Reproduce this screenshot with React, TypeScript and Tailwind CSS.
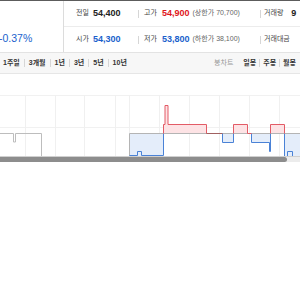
const font = { fontFamily: '"Liberation Sans", "Noto Sans CJK KR", sans-serif' }

function Sep() {
  return <span className="inline-block w-px h-[8px] bg-[#d6d6d6]" />
}

const periods = ['1주일', '3개월', '1년', '3년', '5년', '10년']
const vgrid = [25, 55, 84, 115, 129, 159, 189, 219, 249, 279]

export default function App() {
  return (
    <div className="w-[300px] h-[300px] bg-white overflow-hidden" style={font}>
      {/* header info table */}
      <div className="flex h-[53px] border-t border-[#5c5c5c] border-b border-b-[#e3e3e3]">
        <div className="w-[64px] shrink-0 border-r border-[#dcdcdc] flex flex-col overflow-hidden">
          <div className="h-[26px]" />
          <div className="h-[26px] flex items-center -ml-[1px] text-[10.5px] text-[#1a5fcc]">-0.37%</div>
        </div>
        <div className="flex-1 flex flex-col text-[7px] text-[#444] whitespace-nowrap">
          <div className="h-[26px] flex items-center border-b border-[#ececec]">
            <div className="w-[74px] pl-[12px] flex items-center">
              <span className="w-[17px]">전일</span>
              <span className="text-[9px] font-bold text-[#222]">54,400</span>
            </div>
            <Sep />
            <div className="w-[121px] pl-[5px] flex items-center">
              <span className="w-[18px]">고가</span>
              <span className="text-[9px] font-bold text-[#e0161c]">54,900</span>
              <span className="ml-[3px] text-[#666]">(상한가 70,700)</span>
            </div>
            <Sep />
            <div className="pl-[3px] flex items-center">
              <span>거래량</span>
              <span className="ml-[8px] text-[9px] font-bold text-[#222]">9</span>
            </div>
          </div>
          <div className="h-[25px] flex items-center">
            <div className="w-[74px] pl-[12px] flex items-center">
              <span className="w-[17px]">시가</span>
              <span className="text-[9px] font-bold text-[#1a5fcc]">54,300</span>
            </div>
            <Sep />
            <div className="w-[121px] pl-[5px] flex items-center">
              <span className="w-[18px]">저가</span>
              <span className="text-[9px] font-bold text-[#1a5fcc]">53,800</span>
              <span className="ml-[3px] text-[#666]">(하한가 38,100)</span>
            </div>
            <Sep />
            <div className="pl-[3px] flex items-center">
              <span>거래대금</span>
            </div>
          </div>
        </div>
      </div>

      {/* period tabs */}
      <div className="h-[21px] bg-[#f7f7f7] border-b border-[#e6e6e6] flex items-center justify-between text-[7px] font-bold text-[#333] whitespace-nowrap">
        <div className="flex items-center pl-[3px] gap-[4px]">
          {periods.map((p, i) => (
            <div key={p} className="flex items-center gap-[4px]">
              {i > 0 && <Sep />}
              <span>{p}</span>
            </div>
          ))}
        </div>
        <div className="flex items-center gap-[3px] pr-[4px]">
          <span className="font-normal text-[#999] mr-[7px]">봉차트</span>
          <span>일봉</span>
          <Sep />
          <span>주봉</span>
          <Sep />
          <span>월봉</span>
        </div>
      </div>

      {/* chart */}
      <svg width="300" height="82" viewBox="0 74 300 82" className="block">
        <line x1="0" y1="95.5" x2="300" y2="95.5" stroke="#f1f1f1" />
        <line x1="0" y1="127.5" x2="300" y2="127.5" stroke="#f1f1f1" />
        {vgrid.map((x) => (
          <line key={x} x1={x + 0.5} y1="95" x2={x + 0.5} y2="156" stroke="#f0f0f0" />
        ))}
        {/* fills */}
        <rect x="129" y="133" width="34" height="23" fill="#e4edfa" />
        <polygon points="163,133 163,124 165,124 165,105 168,105 168,124 206,124 206,133" fill="#fde3e5" />
        <rect x="222" y="133" width="11" height="9" fill="#e4edfa" />
        <rect x="233" y="124" width="14" height="9" fill="#fde3e5" />
        <polygon points="251,133 251,142 269,142 269,151 270,151 270,133" fill="#e4edfa" />
        <rect x="270" y="124" width="14" height="9" fill="#fde3e5" />
        <rect x="284" y="133" width="16" height="23" fill="#e4edfa" />
        {/* baseline */}
        <path d="M129.5,156 V133.5 H300" fill="none" stroke="#b4b4b4" strokeWidth="1" />
        {/* gray past segment */}
        <path d="M0,133.5 H13.5 V142 H15.5 V133.5 H41.5 V156" fill="none" stroke="#bdbdbd" strokeWidth="1" />
        {/* blue segments */}
        <path d="M129.5,155.5 H137.5 V151.5 H141.5 V155.5 H163.5 V133.5" fill="none" stroke="#4a82d6" strokeWidth="1" />
        <path d="M222.5,133.5 V142.5 H233.5 V133.5" fill="none" stroke="#4a82d6" strokeWidth="1" />
        <path d="M251.5,133.5 V142.5 H269.5 V151.5 H270.5 V133.5" fill="none" stroke="#4a82d6" strokeWidth="1" />
        <path d="M284.5,133.5 V156 M287.5,156 V151.5 H292.5 V156" fill="none" stroke="#4a82d6" strokeWidth="1" />
        {/* red segments */}
        <path d="M163.5,133.5 V124.5 H165 V105.5 H168 V124.5 H206.5 V133.5" fill="none" stroke="#e35b66" strokeWidth="1" />
        <path d="M206.5,133.5 H222.5" fill="none" stroke="#a06060" strokeWidth="1" />
        <path d="M233.5,133.5 V124.5 H247.5 V133.5 H251.5" fill="none" stroke="#e35b66" strokeWidth="1" />
        <path d="M270.5,133.5 V124.5 H284.5 V133.5" fill="none" stroke="#e35b66" strokeWidth="1" />
      </svg>

      {/* scroll bar */}
      <div className="h-[6px] bg-[#ececec] border-t border-[#d0d0d0]">
        <div className="h-[5px] w-[287px] bg-[#8d8d8d] rounded-r-full" />
      </div>
    </div>
  )
}
